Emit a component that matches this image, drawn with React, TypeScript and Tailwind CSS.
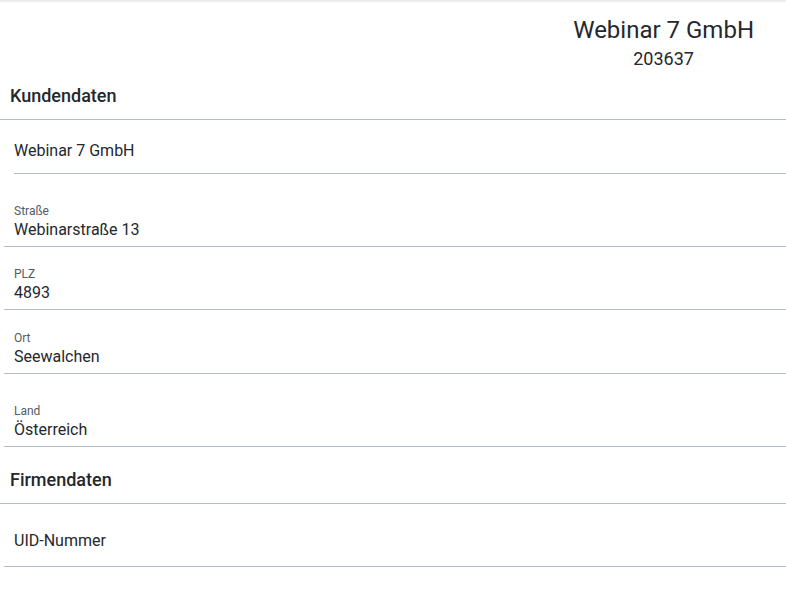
type Field = {
  label?: string;
  value: string;
  rowClass: string;
};

const kundenFields: Field[] = [
  { value: "Webinar 7 GmbH", rowClass: "ml-[14px] pt-[19px] pb-[10px]" },
  { label: "Straße", value: "Webinarstraße 13", rowClass: "ml-1 pl-[10px] pt-[30px] pb-[5px]" },
  { label: "PLZ", value: "4893", rowClass: "ml-1 pl-[10px] pt-[20px] pb-[5px]" },
  { label: "Ort", value: "Seewalchen", rowClass: "ml-1 pl-[10px] pt-[21px] pb-[5px]" },
  { label: "Land", value: "Österreich", rowClass: "ml-1 pl-[10px] pt-[30px] pb-[5px]" },
];

function FieldRow({ field }: { field: Field }) {
  return (
    <div className={`border-b border-[#b3bcc7] ${field.rowClass}`}>
      {field.label && (
        <div className="text-[12px] leading-[14px] text-[#555b62] mb-[1px]">
          {field.label}
        </div>
      )}
      <div
        className={`text-[16px] text-[#24282d] ${field.label ? "leading-[22px]" : "leading-[24px]"}`}
      >
        {field.value}
      </div>
    </div>
  );
}

export default function App() {
  return (
    <div className="w-[786px] h-[601px] bg-white overflow-hidden font-['Roboto',sans-serif]">
      {/* Top shadow edge */}
      <div className="h-[3px] bg-gradient-to-b from-[#e6e6e6] to-white"></div>

      {/* Header */}
      <div className="flex justify-end pr-[32px] pt-[11px]">
        <div className="text-center text-[#24282d]">
          <div className="text-[24px] leading-[32px]">Webinar 7 GmbH</div>
          <div className="mt-[1px] text-[18px] leading-[24px]">203637</div>
        </div>
      </div>

      {/* Kundendaten */}
      <div className="pl-[10px] pt-[13px] pb-[11px] border-b border-[#b3bcc7]">
        <h2 className="text-[18px] leading-[24px] font-medium text-[#24282d]">
          Kundendaten
        </h2>
      </div>
      {kundenFields.map((f) => (
        <FieldRow key={f.value} field={f} />
      ))}

      {/* Firmendaten */}
      <div className="pl-[10px] pt-[21px] pb-[11px] border-b border-[#b3bcc7]">
        <h2 className="text-[18px] leading-[24px] font-medium text-[#24282d]">
          Firmendaten
        </h2>
      </div>
      <div className="ml-1 pl-[10px] pt-[25px] pb-[13px] border-b border-[#b3bcc7]">
        <div className="text-[16px] leading-[24px] text-[#24282d]">UID-Nummer</div>
      </div>
    </div>
  );
}
